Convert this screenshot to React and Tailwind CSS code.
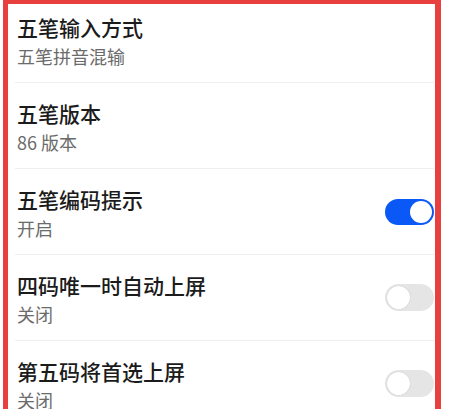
const rows = [
  { title: "五笔输入方式", sub: "五笔拼音混输" },
  { title: "五笔版本", sub: "86 版本" },
  { title: "五笔编码提示", sub: "开启", toggle: true, on: true },
  { title: "四码唯一时自动上屏", sub: "关闭", toggle: true, on: false },
  { title: "第五码将首选上屏", sub: "关闭", toggle: true, on: false },
];

function Toggle({ on }) {
  if (on) {
    return (
      <div className="w-[49px] h-[26px] rounded-full bg-[#0a59f7] flex items-center justify-end p-[2px] shrink-0">
        <div className="w-[22px] h-[22px] rounded-full bg-white" />
      </div>
    );
  }
  return (
    <div className="w-[49px] h-[27px] rounded-full bg-[#e5e5e5] flex items-center justify-start p-[2px] shrink-0">
      <div className="w-[23px] h-[23px] rounded-full bg-white shadow-[0_0_1px_rgba(0,0,0,0.25)]" />
    </div>
  );
}

export default function App() {
  return (
    <div
      className="w-[449px] h-[409px] overflow-hidden bg-white"
      style={{ fontFamily: '"Noto Sans CJK SC", "Noto Sans", sans-serif' }}
    >
      <div className="ml-[3px] w-[438px] h-[420px] border-t-4 border-l-[5px] border-r-[6px] border-[#e8403f] pl-[7px] pr-[1px]">
        {rows.map((r, i) => (
          <div
            key={i}
            className={
              "flex items-center justify-between border-b border-[#efefef] " +
              (i === 0 ? "h-[79px]" : "h-[86px]")
            }
          >
            <div className={"self-start pl-[2px] " + (i === 0 ? "pt-[9px]" : "pt-[16px]")}>
              <div className="text-[21px] leading-[28px] font-medium text-[#1b1b1b]">{r.title}</div>
              <div className="mt-[3px] text-[18px] leading-[24px] text-[#6b6b6b]">{r.sub}</div>
            </div>
            {r.toggle && <Toggle on={r.on} />}
          </div>
        ))}
      </div>
    </div>
  );
}
